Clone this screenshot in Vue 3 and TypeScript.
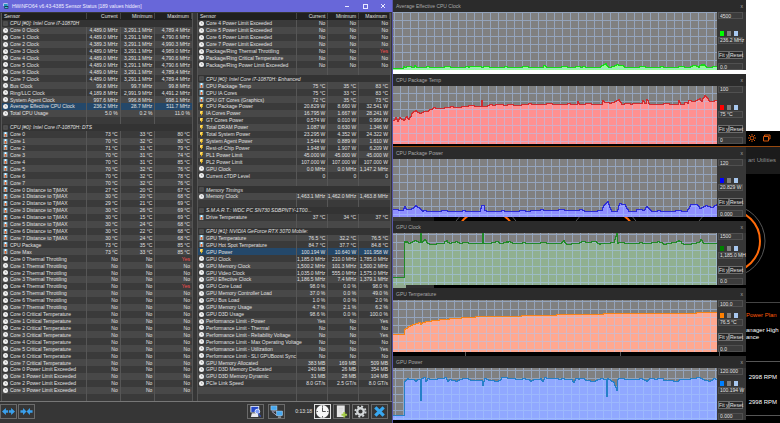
<script setup lang="ts">
type Icon = 'clock' | 'temp' | 'power' | 'chip' | 'none'
interface Row {
  icon: Icon
  name: string
  values: string[]
  active?: boolean
}

const group = (name: string): Row => ({ icon: 'chip', name, values: ['', '', ''] })
const blank = (): Row => ({ icon: 'none', name: '', values: ['', '', ''] })
const unit = (icon: Icon, u: string) => (name: string, ...v: string[]): Row => ({
  icon,
  name,
  values: v.map((x) => `${x} ${u}`),
})
const mhz = unit('clock', 'MHz')
const pct = unit('clock', '%')
const deg = unit('temp', '°C')
const watt = unit('power', 'W')
const mb = unit('clock', 'MB')
const flag = (name: string, ...v: string[]): Row => ({
  icon: 'clock',
  name,
  values: v.length ? v : ['No', 'No', 'No'],
})
const active = (row: Row): Row => ({ ...row, active: true })
const cores = [0, 1, 2, 3, 4, 5, 6, 7]

const coreClocks = [
  ['4,489.0', '4,789.4'],
  ['4,489.0', '4,790.6'],
  ['4,389.3', '4,990.3'],
  ['4,489.0', '4,989.0'],
  ['4,489.0', '4,790.6'],
  ['4,489.0', '4,790.6'],
  ['4,489.0', '4,789.4'],
  ['4,489.0', '4,789.4'],
]
const coreTemps = [
  ['73', '33', '80'],
  ['70', '32', '80'],
  ['71', '31', '79'],
  ['70', '31', '74'],
  ['70', '31', '85'],
  ['70', '32', '76'],
  ['70', '32', '78'],
  ['70', '32', '76'],
]
const coreDistances = [
  ['27', '20', '67'],
  ['30', '20', '68'],
  ['29', '21', '69'],
  ['30', '26', '69'],
  ['30', '15', '69'],
  ['30', '24', '68'],
  ['30', '22', '68'],
  ['30', '24', '68'],
]

const leftRows: Row[] = [
  group('CPU [#0]: Intel Core i7-10870H'),
  ...coreClocks.map(([cur, max], i) => mhz(`Core ${i} Clock`, cur, '3,291.1', max)),
  mhz('Bus Clock', '99.8', '99.7', '99.8'),
  mhz('Ring/LLC Clock', '4,189.8', '2,991.9', '4,491.2'),
  mhz('System Agent Clock', '997.6', '996.8', '998.1'),
  active(mhz('Average Effective CPU Clock', '236.2', '28.7', '511.7')),
  pct('Total CPU Usage', '5.0', '0.2', '11.0'),
  blank(),
  group('CPU [#0]: Intel Core i7-10870H: DTS'),
  ...coreTemps.map((v, i) => deg(`Core ${i}`, ...v)),
  ...coreDistances.map((v, i) => deg(`Core ${i} Distance to TjMAX`, ...v)),
  deg('CPU Package', '73', '35', '85'),
  deg('Core Max', '73', '33', '85'),
  ...cores.map((i) => flag(`Core ${i} Thermal Throttling`, 'No', 'No', i % 4 === 0 ? 'Yes!' : 'No')),
  ...cores.map((i) => flag(`Core ${i} Critical Temperature`)),
  ...cores.slice(0, 4).map((i) => flag(`Core ${i} Power Limit Exceeded`)),
  blank(),
]

const rightRows: Row[] = [
  ...cores.slice(4).map((i) => flag(`Core ${i} Power Limit Exceeded`)),
  flag('Package/Ring Thermal Throttling', 'No', 'No', 'Yes!'),
  flag('Package/Ring Critical Temperature'),
  flag('Package/Ring Power Limit Exceeded'),
  blank(),
  group('CPU [#0]: Intel Core i7-10870H: Enhanced'),
  deg('CPU Package Temp', '75', '35', '83'),
  deg('CPU IA Cores', '75', '33', '83'),
  deg('CPU GT Cores (Graphics)', '72', '35', '73'),
  watt('CPU Package Power', '20.829', '8.660', '32.541'),
  watt('IA Cores Power', '16.795', '1.667', '28.241'),
  watt('GT Cores Power', '0.574', '0.010', '0.966'),
  watt('Total DRAM Power', '1.087', '0.630', '1.346'),
  watt('Total System Power', '23.295', '4.352', '24.322'),
  watt('System Agent Power', '1.544', '0.889', '1.610'),
  watt('Rest-of-Chip Power', '1.948', '1.907', '6.209'),
  watt('PL1 Power Limit', '45.000', '45.000', '45.000'),
  watt('PL2 Power Limit', '107.000', '107.000', '107.000'),
  mhz('GPU Clock', '0.0', '0.0', '1,147.2'),
  flag('Current cTDP Level', '0', '0', '0'),
  blank(),
  group('Memory Timings'),
  mhz('Memory Clock', '1,463.1', '1,462.0', '1,463.8'),
  blank(),
  group('S.M.A.R.T.: WDC PC SN730 SDBPNTY-1T00...'),
  deg('Drive Temperature', '37', '34', '37'),
  blank(),
  group('GPU [#1]: NVIDIA GeForce RTX 3070 Mobile:'),
  deg('GPU Temperature', '76.5', '32.2', '76.5'),
  deg('GPU Hot Spot Temperature', '84.7', '37.7', '84.8'),
  active(watt('GPU Power', '100.194', '10.640', '101.958')),
  mhz('GPU Clock', '1,185.0', '210.0', '1,785.0'),
  mhz('GPU Memory Clock', '1,500.2', '101.3', '1,500.2'),
  mhz('GPU Video Clock', '1,035.0', '555.0', '1,575.0'),
  mhz('GPU Effective Clock', '1,186.5', '7.4', '1,379.1'),
  pct('GPU Core Load', '98.0', '0.0', '98.0'),
  pct('GPU Memory Controller Load', '37.0', '0.0', '49.0'),
  pct('GPU Bus Load', '1.0', '0.0', '2.0'),
  pct('GPU Memory Usage', '4.7', '2.1', '6.2'),
  pct('GPU D3D Usage', '98.6', '0.0', '100.0'),
  flag('Performance Limit - Power', 'Yes', 'No', 'Yes'),
  flag('Performance Limit - Thermal'),
  flag('Performance Limit - Reliability Voltage', 'No', 'No', 'Yes'),
  flag('Performance Limit - Max Operating Voltage'),
  flag('Performance Limit - Utilization', 'No', 'No', 'Yes'),
  flag('Performance Limit - SLI GPUBoost Sync'),
  mb('GPU Memory Allocated', '383', '169', '509'),
  mb('GPU D3D Memory Dedicated', '240', '26', '354'),
  mb('GPU D3D Memory Dynamic', '31', '28', '104'),
  unit('clock', 'GT/s')('PCIe Link Speed', '8.0', '2.5', '8.0'),
  blank(),
  blank(),
]

const panes = [
  { id: 'left', rows: leftRows },
  { id: 'right', rows: rightRows },
]

interface Graph {
  title: string
  kind: string
  height: number
  top: string
  value: string
  bottom: string
  gx: number
  gy: number
  noise: number
  points: number[][]
}

const graphs: Graph[] = [
  {
    title: 'Average Effective CPU Clock', kind: 'lime', height: 58, top: '4500', value: '236.2 MHz', bottom: '0.0',
    gx: 1, gy: 0, noise: 1,
    points: [[0, 56], [9, 56], [10, 54], [12, 55], [20, 55], [21, 53], [23, 55], [65, 55], [85, 54], [90, 55], [148, 55], [150, 54], [153, 55], [180, 55], [183, 54], [190, 55], [207, 55], [210, 53], [212, 52], [215, 55], [220, 54], [223, 52], [227, 53], [231, 55], [295, 55], [300, 53], [302, 53], [305, 55], [310, 52], [313, 55], [324, 54]],
  },
  {
    title: 'CPU Package Temp', kind: 'red', height: 58, top: '100', value: '75 °C', bottom: '0',
    gx: 7, gy: 7, noise: 1,
    points: [[0, 34], [2, 31], [4, 35], [6, 31], [10, 34], [13, 30], [15, 33], [18, 28], [22, 24], [26, 27], [30, 25], [38, 24], [40, 22], [60, 21], [75, 20], [87, 20], [88, 14], [89, 20], [105, 18], [115, 19], [140, 18], [183, 18], [184, 15], [186, 18], [208, 18], [209, 14], [211, 16], [215, 17], [220, 16], [225, 13], [228, 18], [248, 17], [249, 14], [252, 18], [253, 14], [256, 18], [284, 18], [285, 14], [287, 18], [294, 17], [295, 14], [300, 15], [306, 12], [308, 15], [311, 10], [316, 15], [324, 14]],
  },
  {
    title: 'CPU Package Power', kind: 'blue', height: 58, top: '120', value: '20.829 W', bottom: '0.000',
    gx: 6, gy: 7, noise: 1,
    points: [[0, 50], [9, 51], [11, 47], [13, 51], [19, 49], [22, 46], [26, 49], [29, 52], [86, 52], [88, 47], [90, 47], [91, 52], [182, 51], [200, 52], [208, 52], [210, 46], [214, 42], [216, 48], [218, 52], [223, 52], [226, 45], [231, 45], [235, 52], [250, 51], [253, 47], [255, 49], [258, 52], [293, 52], [297, 45], [302, 45], [306, 49], [312, 46], [318, 48], [324, 46]],
  },
  {
    title: 'GPU Clock', kind: 'green', height: 52, top: '1500', value: '1,185.0 MH', bottom: '0.0',
    gx: 3, gy: 1, noise: 1,
    points: [[0, 44], [10, 44], [11, 8], [15, 10], [22, 7], [26, 9], [27, 0], [28, 9], [31, 7], [34, 11], [50, 10], [53, 8], [56, 10], [63, 8], [66, 10], [88, 10], [89, 0], [90, 11], [104, 8], [108, 11], [116, 8], [120, 10], [168, 10], [170, 8], [173, 11], [202, 8], [206, 11], [220, 9], [223, 0], [224, 10], [250, 10], [264, 9], [270, 11], [285, 8], [290, 11], [305, 10], [307, 7], [310, 10], [324, 10]],
  },
  {
    title: 'GPU Temperature', kind: 'orange', height: 52, top: '100.0', value: '76.5 °C', bottom: '0.0',
    gx: 5, gy: 1, noise: 0,
    points: [[0, 34], [10, 34], [11, 29], [15, 26], [20, 24], [26, 22], [27, 24], [29, 22], [40, 20], [60, 18], [88, 16], [110, 16], [180, 14], [208, 14], [211, 13], [280, 13], [324, 12]],
  },
  {
    title: 'GPU Power', kind: 'azure', height: 52, top: '120.000', value: '100.194 W', bottom: '0.000',
    gx: 2, gy: 2, noise: 1,
    points: [[0, 47], [10, 47], [11, 13], [14, 11], [20, 11], [22, 13], [24, 11], [26, 11], [27, 32], [28, 10], [31, 10], [32, 14], [34, 11], [52, 10], [54, 13], [56, 11], [63, 13], [66, 11], [88, 12], [89, 17], [91, 11], [104, 13], [108, 10], [135, 11], [137, 13], [140, 11], [147, 11], [149, 14], [151, 10], [178, 11], [180, 14], [182, 10], [200, 13], [204, 11], [212, 11], [213, 28], [214, 10], [220, 14], [223, 22], [224, 11], [250, 11], [253, 13], [256, 10], [284, 13], [288, 11], [305, 10], [316, 13], [320, 10], [324, 11]],
  },
]

/** Interpolates the sample points into a stepped trace, one sample per pixel. */
function trace(g: Graph): string {
  let d = ''
  for (let x = 0; x <= 324; x += 1) {
    const k = Math.max(0, g.points.findIndex((p) => p[0] >= x))
    const b = g.points[k]
    const a = g.points[Math.max(0, k - 1)]
    const t = b[0] === a[0] ? 1 : (x - a[0]) / (b[0] - a[0])
    const hash = (Math.floor(x / 3) * 7919 + g.title.length * 31) % 13
    const jitter = hash < 3 && x > 12 ? g.noise : 0
    const y = Math.round(a[1] + (b[1] - a[1]) * t - jitter) + 0.5
    d += x ? `H${x + 0.5}V${y}` : `M0 ${y}`
  }
  return d
}
const area = (g: Graph) => `${trace(g)}V${g.height}H0Z`
</script>

<template>
  <div class="desktop">
    <svg class="icon-defs" aria-hidden="true">
      <symbol id="i-clock" viewBox="0 0 16 16">
        <circle cx="8" cy="8" r="8" fill="#eee" />
        <path d="M8 4V8H11" stroke="#888" stroke-width="2" fill="none" />
      </symbol>
      <symbol id="i-temp" viewBox="0 0 16 16">
        <rect x="2" width="12" height="16" fill="#86c2e2" />
        <rect x="6" y="1" width="4" height="13" rx="2" fill="#fff" />
        <rect x="5" y="6" width="6" height="9" rx="2" fill="#e0642a" />
      </symbol>
      <symbol id="i-power" viewBox="0 0 16 16">
        <path d="M4 0H13L11 6H13L6 16L7 9H3Z" fill="#ffc928" />
        <path d="M5 1H9L6 8H4Z" fill="#fff3b0" />
      </symbol>
      <symbol id="i-chip" viewBox="0 0 16 16">
        <rect x="1" y="1" width="14" height="14" fill="#5b5b5b" />
        <rect x="4" y="4" width="8" height="8" fill="#494949" />
      </symbol>
    </svg>

    <main class="monitor">
      <header class="caption">
        <svg class="logo" viewBox="0 0 18 18" aria-hidden="true">
          <rect x="1" y="1" width="13" height="8" fill="#d8eef8" />
          <rect x="3" y="3" width="11" height="6" fill="#2596be" />
          <rect x="4" y="9" width="12" height="8" fill="#123d4c" />
          <rect x="6" y="12" width="8" height="3" fill="#46c0c8" />
        </svg>
        <h1>HWiNFO64 v6.43-4385 Sensor Status [189 values hidden]</h1>
        <div class="caption-buttons">
          <button type="button" aria-label="Minimize"><svg viewBox="0 0 6 6"><path d="M1 3.500H5" /></svg></button>
          <button type="button" aria-label="Maximize"><svg viewBox="0 0 6 6"><rect x="1.500" y="1.500" width="4" height="4" /></svg></button>
          <button type="button" aria-label="Close"><svg viewBox="0 0 6 6"><path d="M1 1L5 5M5 1L1 5" /></svg></button>
        </div>
      </header>

      <div class="panes">
        <table v-for="pane in panes" :key="pane.id" class="sensors" :class="pane.id">
          <thead>
            <tr>
              <th scope="col">Sensor</th>
              <th scope="col">Current</th>
              <th scope="col">Minimum</th>
              <th scope="col">Maximum</th>
            </tr>
          </thead>
          <tbody>
            <tr v-for="(row, i) in pane.rows" :key="i" :class="[row.icon, { active: row.active }]">
              <td class="name">
                <svg v-if="row.icon !== 'none'" class="glyph" aria-hidden="true"><use :href="`#i-${row.icon}`" /></svg>
                <span>{{ row.name }}</span>
              </td>
              <td v-for="(v, j) in row.values" :key="j" :class="{ alert: v === 'Yes!' }">{{ v.replace('!', '') }}</td>
            </tr>
          </tbody>
        </table>
      </div>

      <footer class="toolbar">
        <div class="group tight">
          <button type="button" aria-label="Expand columns">
            <svg viewBox="0 0 30 16"><path d="M0 8L9 0V5H14V11H9V16ZM30 8L21 0V5H16V11H21V16Z" fill="#3aa0ec" /></svg>
          </button>
          <button type="button" aria-label="Shrink columns">
            <svg viewBox="0 0 30 16"><path d="M15 8L7 0V5H1V11H7V16ZM15 8L23 0V5H29V11H23V16Z" fill="#3aa0ec" /></svg>
          </button>
        </div>
        <div class="group">
          <button type="button" aria-label="Sensor summary">
            <svg viewBox="0 0 28 28"><rect x="3" y="2" width="19" height="14" fill="#dfe7fa" /><rect x="5" y="4" width="15" height="11" fill="#2648c8" /><path d="M6 18H20V26H4Z" fill="#e8e8ee" /><circle cx="18" cy="14" r="5" fill="#7d9cf4" stroke="#e5edff" stroke-width="2" /><path d="M20 18L25 25" stroke="#3050c0" stroke-width="3" /></svg>
          </button>
          <button type="button" aria-label="Remote monitoring" class="spaced">
            <svg viewBox="0 0 28 28"><rect x="2" y="2" width="13" height="9" fill="#46a8f0" stroke="#c8e6ff" /><path d="M5 13H12M4 14L14 22" stroke="#aac" stroke-width="2" /><rect x="14" y="13" width="13" height="10" fill="#46a8f0" stroke="#c8e6ff" /><path d="M17 26H24" stroke="#cde" stroke-width="2" /></svg>
          </button>
          <time>0:13:18</time>
          <button type="button" aria-label="Reset clock" class="lit">
            <svg viewBox="0 0 28 28"><circle cx="14" cy="14" r="14" fill="#f8f8f8" /><path d="M14 5V14H21M14 1V4M14 24V27M1 14H4M24 14H27" fill="none" stroke="#444" stroke-width="2" /></svg>
          </button>
          <button type="button" aria-label="Log to file">
            <svg viewBox="0 0 28 28"><path d="M4 1H21V26H4Z" fill="#e6e6e6" /><path d="M8 7H17M8 11H17M8 15H15" stroke="#c4c4c4" stroke-width="1" /><path d="M20 15V27M14 21H26" stroke="#a4cc48" stroke-width="4" /></svg>
          </button>
          <button type="button" aria-label="Settings">
            <svg viewBox="0 0 28 28"><circle cx="14" cy="14" r="7" fill="none" stroke="#d4d8da" stroke-width="5" /><circle cx="14" cy="14" r="11" fill="none" stroke="#d4d8da" stroke-width="4" stroke-dasharray="4.320 4.320" /></svg>
          </button>
          <button type="button" aria-label="Close sensors">
            <svg viewBox="0 0 28 28"><path d="M5 5L23 23M23 5L5 23" stroke="#38a8f0" stroke-width="7" /></svg>
          </button>
        </div>
      </footer>
    </main>

    <section class="workspace">
      <div class="backdrop">
        <div class="page-blank"></div>
        <div class="app-bar">
          <svg viewBox="0 0 24 8" aria-hidden="true">
            <circle cx="4" cy="4" r="2" />
            <path d="M4 0V1M4 7V8M0 4H1M7 4H8M1 1L2 2M6 6L7 7M7 1L6 2M1 7L2 6M15.500 2.500H20.500V7H15.500ZM16.500 2V1H22V5H21" />
          </svg>
        </div>
        <div class="app-tab">art Utilities</div>
        <svg class="gauges" viewBox="0 0 387 160" preserveAspectRatio="xMinYMin meet" aria-hidden="true">
          <g fill="none" stroke="#555" stroke-width="1">
            <circle cx="93" cy="40" r="36" /><circle cx="213" cy="40" r="36" /><circle cx="336" cy="40" r="36" />
            <path d="M72.500 150V156M227.500 150V156M326.500 150V156" />
          </g>
          <g fill="none" stroke="#ff6a0a" stroke-width="2">
            <circle cx="93" cy="40" r="31" /><path d="M213 9A31 31 0 0 1 244 40M336 9A31 31 0 0 1 336 71" />
          </g>
          <rect x="0" y="15" width="18" height="8" fill="#3c3c3c" />
          <rect x="18" y="15" width="23" height="8" fill="#181818" />
          <rect x="0" y="80" width="13" height="9" fill="#90a890" />
          <rect x="13" y="80" width="28" height="9" fill="#303030" />
        </svg>
        <div class="app-info">
          <h2>Power Plan</h2>
          <p>anager High<br />ance</p>
          <ul>
            <li>2998 RPM</li>
            <li>2998 RPM</li>
          </ul>
        </div>
      </div>

      <div class="graphs">
        <article v-for="(g, n) in graphs" :key="g.title" class="graph" :class="g.kind">
          <header>
            <h2>{{ g.title }}</h2>
            <button type="button" :aria-label="`Close ${g.title}`">x</button>
          </header>
          <div class="body">
            <svg class="plot" :viewBox="`0 0 324 ${g.height}`" preserveAspectRatio="none" role="img" :aria-label="g.title">
              <pattern :id="`grid-${n}`" :x="g.gx" :y="g.gy" width="8" height="8" patternUnits="userSpaceOnUse">
                <path d="M0 0H8V1H1V8H0Z" fill="#a8c8f8" />
              </pattern>
              <path class="area" :d="area(g)" />
              <rect width="324" :height="g.height" :fill="`url(#grid-${n})`" opacity="0.5" shape-rendering="crispEdges" />
              <path class="line" :d="trace(g)" />
            </svg>
            <form class="controls" @submit.prevent>
              <input type="text" :value="g.top" :aria-label="`${g.title} maximum`" />
              <div class="swatches">
                <button type="button" class="series" aria-label="Line colour"></button>
                <button type="button" class="ground" aria-label="Background colour"></button>
                <button type="button" class="mesh" aria-label="Grid colour"></button>
              </div>
              <output>{{ g.value }}</output>
              <div class="actions">
                <button type="button">Fit y</button>
                <button type="button">Reset</button>
              </div>
              <input type="text" :value="g.bottom" :aria-label="`${g.title} minimum`" />
            </form>
          </div>
        </article>
      </div>
    </section>
  </div>
</template>

<style>
body {
  background: #000;
}
</style>

<style scoped>
.desktop {
  display: grid;
  grid-template-columns: 393fr 387fr;
  height: 100vh;
  overflow: hidden;
  font-family: "Liberation Sans", sans-serif;
  font-size: 5px;
  line-height: 6px;
  color: #e0e0e0;
}
* {
  box-sizing: border-box;
}
button,
input {
  margin: 0;
  padding: 0;
  border: 0;
  font: inherit;
  color: inherit;
  background: none;
}
h1,
h2,
p,
ul {
  margin: 0;
  padding: 0;
  font: inherit;
  list-style: none;
}
.icon-defs {
  position: absolute;
  width: 0;
  height: 0;
}

.monitor {
  display: flex;
  flex-direction: column;
  min-width: 0;
  background: #363636;
  border-right: 1px solid #5756a8;
}
.caption {
  display: flex;
  align-items: center;
  gap: 3px;
  height: 12px;
  padding-left: 3px;
  background: #6867d9;
  color: #f0f0ff;
}
.logo {
  width: 6px;
  height: 6px;
}
.caption-buttons {
  display: flex;
  gap: 12px;
  margin-left: auto;
  padding-right: 6px;
}
.caption-buttons button,
.caption-buttons svg {
  display: block;
  width: 6px;
  height: 6px;
}
.caption-buttons svg {
  fill: none;
  stroke: #e8e8ff;
}
.panes {
  display: grid;
  grid-template-columns: 192fr 194fr;
  gap: 4px;
  flex: 1;
  min-height: 0;
  padding: 1px 1px 0;
  border-bottom: 1px solid #777;
}
.sensors {
  display: flex;
  flex-direction: column;
  min-width: 0;
  border-left: 1px solid #555;
  border-right: 1px solid #555;
  background: #303030;
}
.sensors thead,
.sensors tbody {
  display: contents;
}
.sensors tr {
  display: grid;
  flex: 1;
  align-items: center;
  min-height: 0;
}
.left tr {
  grid-template-columns: minmax(0, 86fr) minmax(0, 34fr) minmax(0, 35fr) minmax(0, 37fr);
}
.right tr {
  grid-template-columns: minmax(0, 100fr) minmax(0, 31fr) minmax(0, 31fr) minmax(0, 31fr);
}
.sensors th {
  padding: 0 2px;
  font-weight: normal;
  text-align: right;
  border-right: 1px solid #444;
}
.sensors th:first-child {
  text-align: left;
}
.sensors thead tr {
  background: #202020;
}
.sensors td {
  display: flex;
  align-items: center;
  justify-content: flex-end;
  align-self: stretch;
  padding: 0 2px 0 0;
  border-right: 1px solid #565656;
  white-space: nowrap;
}
.sensors td:last-child {
  border-right: 0;
}
.sensors tbody tr {
  background: #3a3a3a;
}
.sensors tbody tr:nth-child(even) {
  background: #484848;
}
.sensors tbody tr.chip {
  background: #333;
  font-style: italic;
}
.sensors tbody .chip td {
  border-color: transparent;
}
.sensors tbody tr.active {
  background: #24486a;
}
.sensors .name {
  justify-content: flex-start;
  gap: 2px;
  padding: 0 0 0 1px;
}
.glyph {
  flex: none;
  width: 5px;
  height: 5px;
}
.sensors .alert {
  color: #ff5050;
}

.toolbar {
  display: flex;
  align-items: center;
  justify-content: space-between;
  height: 21px;
  padding: 0 4px 3px 0;
}
.group {
  display: flex;
  align-items: center;
  gap: 2px;
}
.tight {
  gap: 1px;
}
.toolbar button {
  display: grid;
  place-items: center;
  width: 17px;
  height: 15px;
  border: 1px solid #6a6a6a;
}
.toolbar button.spaced {
  margin: 0 8px 0 2px;
}
.toolbar button.lit {
  border-color: #e0e0e0;
}
.toolbar svg {
  width: 13px;
  height: 13px;
}
.toolbar .tight svg {
  height: 7px;
}

.workspace {
  position: relative;
  min-width: 0;
}
.backdrop {
  position: absolute;
  inset: 0;
  display: flex;
  flex-direction: column;
  background: #000;
}
.page-blank {
  height: 131px;
  background: #fff;
}
.app-bar {
  display: flex;
  justify-content: flex-end;
  height: 16px;
  padding: 3px 8px 0 0;
  border-bottom: 1px solid #98490f;
}
.app-bar svg {
  width: 24px;
  height: 8px;
  fill: none;
  stroke: #d8590c;
}
.app-tab {
  height: 27px;
  padding: 9px 4px 0 0;
  background: #1b1b1b;
  color: #909090;
  font: 6px/8px "Liberation Sans", sans-serif;
  text-align: right;
}
.gauges {
  width: 100%;
  height: 160px;
  margin-top: 27px;
}
.app-info {
  align-self: flex-end;
  width: 34px;
  margin-top: -59px;
  border-top: 1px solid #444;
  font: 6px/7px "Liberation Sans", sans-serif;
  color: #fff;
  white-space: nowrap;
}
.app-info h2 {
  padding: 9px 0 8px;
  color: #ff5a0a;
}
.app-info ul {
  display: grid;
  gap: 18px;
  margin-top: 20px;
  padding: 12px 3px 9px 0;
  border: solid #555;
  border-width: 1px 0;
  text-align: right;
}

.graphs {
  position: relative;
  display: flex;
  flex-direction: column;
  justify-content: space-between;
  height: 100%;
  padding: 0 34px 3px 0;
}
.graph {
  display: flex;
  flex-direction: column;
  height: 64px;
  background: #373737;
}
.lime,
.red,
.blue {
  height: 70px;
}
.graph header {
  display: flex;
  align-items: center;
  justify-content: space-between;
  height: 12px;
  padding: 0 3px;
  background: #2b2b2b;
  color: #a8a8a8;
}
.body {
  display: flex;
  flex: 1;
  min-height: 0;
}
.plot {
  flex: 1;
  min-width: 0;
  height: 100%;
  background: #808080;
}
.area {
  fill: var(--fill);
}
.line {
  fill: none;
  stroke: var(--line);
  shape-rendering: crispEdges;
}
.lime { --line: #18d818; --fill: #90ff90; --key: #00ff00; }
.red { --line: #d02c30; --fill: #ff9090; --key: #ff0000; }
.blue { --line: #2c2cd4; --fill: #9090ff; --key: #0000ff; }
.green { --line: #228a28; --fill: #90b090; --key: #008000; }
.orange { --line: #f88418; --fill: #ffa890; --key: #ff8000; }
.azure { --line: #2680c8; --fill: #90a8ff; --key: #0080ff; }
.controls {
  display: flex;
  flex-direction: column;
  width: 29px;
  padding: 0 3px 0 1px;
}
.controls input,
.controls output {
  display: block;
  width: 100%;
  height: 7px;
  padding-left: 1px;
  border: 1px solid #505050;
  background: #3c3c3c;
  line-height: 5px;
  white-space: nowrap;
}
.swatches {
  display: flex;
  gap: 3px;
  margin: auto 0 1px;
  padding-left: 2px;
}
.swatches button {
  width: 4px;
  height: 5px;
}
.series { background: var(--key); }
.ground { background: #808080; }
.mesh { background: #a8c8f0; }
.actions {
  display: grid;
  grid-template-columns: 11fr 14fr;
  margin: 7px 0 4px;
}
.actions button {
  min-width: 0;
  height: 8px;
  border: 1px solid #6c6c6c;
  background: #262626;
  line-height: 6px;
  white-space: nowrap;
}
</style>
